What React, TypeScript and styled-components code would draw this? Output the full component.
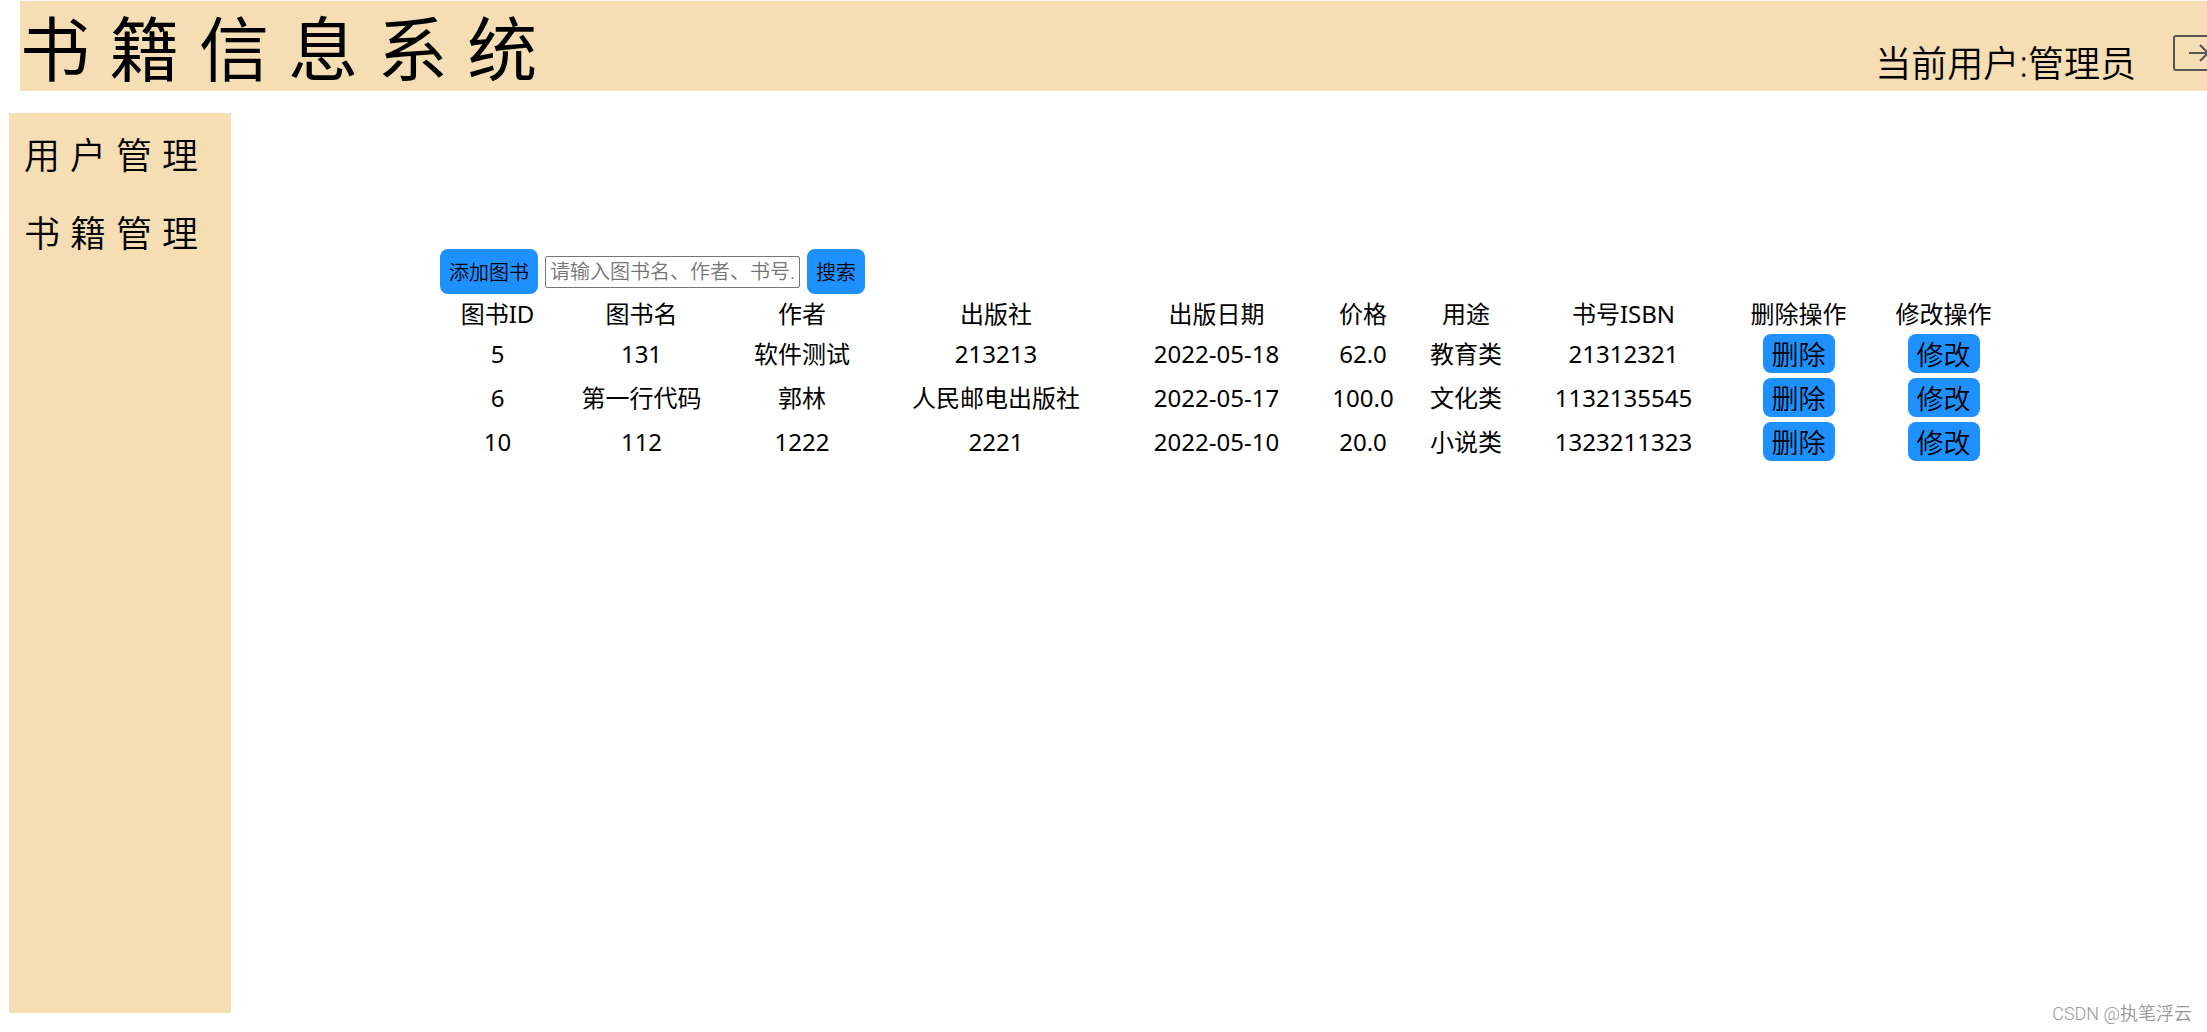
import React from "react";
import styled, { createGlobalStyle } from "styled-components";

const GlobalStyle = createGlobalStyle`
  *, *::before, *::after { box-sizing: border-box; }
  body {
    margin: 0;
    background: #fff;
    color: #000;
    font-family: "Noto Sans", "Noto Sans CJK SC", sans-serif;
    font-weight: 350;
  }
`;

const spacedFont = `"Liberation Sans", "Noto Sans CJK SC", sans-serif`;

const Page = styled.div`
  position: relative;
  display: flex;
  flex-direction: column;
  min-height: 100vh;
  padding-top: 1px;
  overflow: hidden;
`;

const Header = styled.header`
  display: flex;
  justify-content: space-between;
  height: 90px;
  margin-left: 20px;
  background: wheat;
`;

const Title = styled.h1`
  margin: 0;
  font-family: ${spacedFont};
  font-size: 70px;
  font-weight: 400;
  line-height: 102px;
  white-space: nowrap;
`;

const Account = styled.div`
  display: flex;
  align-items: flex-start;
  gap: 36px;
  margin-right: -16px;
  padding-top: 33px;
`;

const UserName = styled.span`
  font-size: 36px;
  line-height: 60px;
  white-space: nowrap;
`;

const LogoutButton = styled.button`
  display: block;
  padding: 0;
  border: 0;
  background: none;
  line-height: 0;
  cursor: pointer;
`;

const Body = styled.div`
  display: flex;
  flex: 1;
  padding: 22px 0 19px 9px;
`;

const Sidebar = styled.nav`
  display: flex;
  flex: none;
  flex-direction: column;
  gap: 30px;
  width: 222px;
  padding: 20px 15px;
  background: wheat;
`;

const NavLink = styled.a`
  color: inherit;
  font-family: ${spacedFont};
  font-size: 36px;
  line-height: 48px;
  text-decoration: none;
  white-space: nowrap;
`;

const Main = styled.main`
  flex: 1;
  min-width: 0;
  padding: 136px 190px 0 209px;
`;

const Toolbar = styled.form`
  display: flex;
  align-items: center;
  gap: 7px;
`;

const Button = styled.button<{ $size?: "row" | "bar" }>`
  height: ${(p) => (p.$size === "row" ? 39 : 45)}px;
  padding: 0 9px;
  border: 0;
  border-radius: 8px;
  background: dodgerblue;
  color: #000;
  font: inherit;
  font-weight: 350;
  font-size: ${(p) => (p.$size === "row" ? 27 : 20)}px;
  line-height: ${(p) => (p.$size === "row" ? 41 : 47)}px;
  vertical-align: top;
  white-space: nowrap;
  cursor: pointer;
`;

const SearchInput = styled.input`
  width: 255px;
  height: 32px;
  padding: 0 4px;
  border: 1px solid #767676;
  border-radius: 2px;
  background: #fff;
  font: inherit;
  font-size: 20px;

  &::placeholder {
    color: #757575;
    opacity: 1;
  }
`;

const Table = styled.table`
  width: 100%;
  table-layout: fixed;
  border-collapse: separate;
  border-spacing: 3px;
  font-size: 24px;
  font-weight: 400;
  line-height: 31px;
  text-align: center;
`;

const Col = styled.col<{ $width: number }>`
  width: ${(p) => p.$width}px;
`;

const HeadCell = styled.th`
  padding: 1px;
  font-weight: inherit;
  white-space: nowrap;
`;

const Cell = styled.td`
  padding: 1px;
  white-space: nowrap;
`;

const Watermark = styled.span`
  position: absolute;
  right: 15px;
  bottom: 6px;
  color: #999;
  font-family: Roboto, "Noto Sans CJK SC", sans-serif;
  font-size: 18px;
  line-height: 24px;
`;

const columns = [
  { label: "图书ID", width: 109 },
  { label: "图书名", width: 173 },
  { label: "作者", width: 142 },
  { label: "出版社", width: 240 },
  { label: "出版日期", width: 195 },
  { label: "价格", width: 92 },
  { label: "用途", width: 108 },
  { label: "书号ISBN", width: 201 },
  { label: "删除操作", width: 143 },
  { label: "修改操作", width: 141 },
];

const books = [
  ["5", "131", "软件测试", "213213", "2022-05-18", "62.0", "教育类", "21312321"],
  ["6", "第一行代码", "郭林", "人民邮电出版社", "2022-05-17", "100.0", "文化类", "1132135545"],
  ["10", "112", "1222", "2221", "2022-05-10", "20.0", "小说类", "1323211323"],
];

function LogoutIcon() {
  return (
    <svg width="51" height="38" viewBox="0 0 51 38" fill="none" stroke="#555" strokeWidth="2">
      <path d="M49 11V4a2 2 0 0 0-2-2H4a2 2 0 0 0-2 2v30a2 2 0 0 0 2 2h43a2 2 0 0 0 2-2v-7" />
      <path d="M17 19h20M28 11l8 8-8 8" />
    </svg>
  );
}

export default function App() {
  return (
    <>
      <GlobalStyle />
      <Page>
        <Header>
          <Title>书 籍 信 息 系 统</Title>
          <Account>
            <UserName>当前用户:管理员</UserName>
            <LogoutButton type="button" aria-label="退出">
              <LogoutIcon />
            </LogoutButton>
          </Account>
        </Header>
        <Body>
          <Sidebar>
            <NavLink href="#users">用 户 管 理</NavLink>
            <NavLink href="#books">书 籍 管 理</NavLink>
          </Sidebar>
          <Main>
            <Toolbar onSubmit={(e) => e.preventDefault()}>
              <Button type="button">添加图书</Button>
              <SearchInput
                type="text"
                aria-label="搜索图书"
                placeholder="请输入图书名、作者、书号."
              />
              <Button type="submit">搜索</Button>
            </Toolbar>
            <Table>
              <colgroup>
                {columns.map((c) => (
                  <Col key={c.label} $width={c.width} />
                ))}
              </colgroup>
              <thead>
                <tr>
                  {columns.map((c) => (
                    <HeadCell key={c.label} scope="col">
                      {c.label}
                    </HeadCell>
                  ))}
                </tr>
              </thead>
              <tbody>
                {books.map((book) => (
                  <tr key={book[0]}>
                    {book.map((value, i) => (
                      <Cell key={columns[i].label}>{value}</Cell>
                    ))}
                    <Cell>
                      <Button type="button" $size="row">删除</Button>
                    </Cell>
                    <Cell>
                      <Button type="button" $size="row">修改</Button>
                    </Cell>
                  </tr>
                ))}
              </tbody>
            </Table>
          </Main>
        </Body>
        <Watermark>CSDN @执笔浮云</Watermark>
      </Page>
    </>
  );
}
